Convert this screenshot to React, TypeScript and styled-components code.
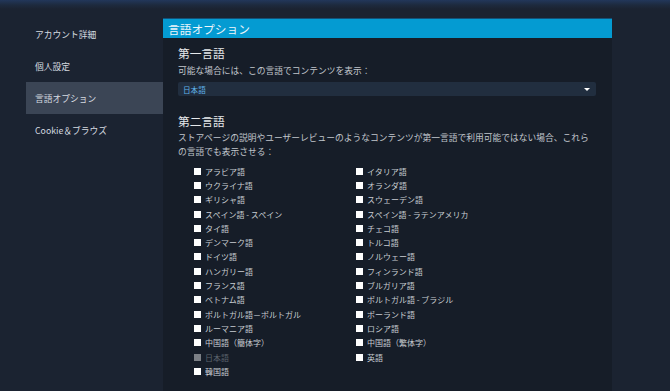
import React from 'react';
import styled, {createGlobalStyle} from 'styled-components';

const GlobalStyle = createGlobalStyle`
  html, body {
    margin: 0;
    padding: 0;
    overflow: hidden;
    background: #1b2331;
  }
  body {
    font-family: "Noto Sans CJK JP", "Noto Sans", sans-serif;
  }
`;

const Page = styled.div`
  display: flex;
  height: 391px;
  overflow: hidden;
  padding: 18px 0 0 26px;
  box-sizing: border-box;
  background: linear-gradient(180deg, #22375a 0px, #1d2a3e 5px, #1b2331 9px);
`;

const Nav = styled.nav`
  display: flex;
  flex-direction: column;
  align-self: flex-start;
  width: 137px;
`;

const NavItem = styled.div<{$active?: boolean}>`
  height: 32px;
  display: flex;
  align-items: center;
  padding-left: 9px;
  font-size: 8.75px;
  color: #d6dbe0;
  background: ${(p) => (p.$active ? '#3b4555' : 'transparent')};
`;

const Panel = styled.section`
  width: 449px;
  background: #161d28;
`;

const PanelHeader = styled.div`
  height: 20px;
  display: flex;
  align-items: center;
  padding-left: 5px;
  background: #049bd2;
  border-top: 1px solid #13527a;
  box-sizing: border-box;
  font-size: 11.7px;
  color: #eef6fb;
`;

const Body = styled.div`
  padding: 6px 16px 0 15px;
`;

const Heading = styled.h2<{$gap?: number}>`
  margin: ${(p) => p.$gap ?? 0}px 0 0;
  font-size: 11.7px;
  line-height: 17px;
  font-weight: normal;
  color: #e6e9ec;
`;

const Desc = styled.p<{$lh: number; $gap: number}>`
  margin: ${(p) => p.$gap}px 0 0;
  font-size: 8.75px;
  line-height: ${(p) => p.$lh}px;
  color: #c1c6cc;
`;

const Select = styled.div`
  margin-top: 5px;
  height: 14px;
  display: flex;
  align-items: center;
  justify-content: space-between;
  padding: 0 6px 0 5px;
  border-radius: 2px;
  background: #212e3f;
  font-size: 7.6px;
  color: #5fb2e8;
`;

const Arrow = styled.span`
  width: 0;
  height: 0;
  border-left: 3px solid transparent;
  border-right: 3px solid transparent;
  border-top: 3px solid #ffffff;
`;

const Grid = styled.div`
  margin-top: 6px;
  padding-left: 16px;
  display: grid;
  grid-auto-flow: column;
  grid-template-columns: 162px 162px;
  grid-template-rows: repeat(15, 14.3px);
`;

const Option = styled.label<{$disabled?: boolean}>`
  display: flex;
  align-items: center;
  gap: 4px;
  font-size: 8px;
  white-space: nowrap;
  color: ${(p) => (p.$disabled ? '#5c636c' : '#c8cdd2')};
`;

const Box = styled.span<{$disabled?: boolean}>`
  width: 7px;
  height: 7px;
  flex: none;
  background: ${(p) => (p.$disabled ? '#7c8086' : '#ffffff')};
`;

const navItems = ['アカウント詳細', '個人設定', '言語オプション', 'Cookie＆ブラウズ'];

const languages = [
  'アラビア語',
  'ウクライナ語',
  'ギリシャ語',
  'スペイン語 - スペイン',
  'タイ語',
  'デンマーク語',
  'ドイツ語',
  'ハンガリー語',
  'フランス語',
  'ベトナム語',
  'ポルトガル語－ポルトガル',
  'ルーマニア語',
  '中国語（簡体字）',
  '日本語',
  '韓国語',
  'イタリア語',
  'オランダ語',
  'スウェーデン語',
  'スペイン語 - ラテンアメリカ',
  'チェコ語',
  'トルコ語',
  'ノルウェー語',
  'フィンランド語',
  'ブルガリア語',
  'ポルトガル語 - ブラジル',
  'ポーランド語',
  'ロシア語',
  '中国語（繁体字）',
  '英語',
];

const App = () => {
  return (
    <>
      <GlobalStyle />
      <Page>
        <Nav>
          {navItems.map((item) => (
            <NavItem key={item} $active={item === '言語オプション'}>
              {item}
            </NavItem>
          ))}
        </Nav>
        <Panel>
          <PanelHeader>言語オプション</PanelHeader>
          <Body>
            <Heading>第一言語</Heading>
            <Desc $lh={13} $gap={3}>
              可能な場合には、この言語でコンテンツを表示：
            </Desc>
            <Select>
              日本語
              <Arrow />
            </Select>
            <Heading $gap={16}>第二言語</Heading>
            <Desc $lh={13.5} $gap={2}>
              ストアページの説明やユーザーレビューのようなコンテンツが第一言語で利用可能ではない場合、これらの言語でも表示させる：
            </Desc>
            <Grid>
              {languages.map((lang) => {
                const disabled = lang === '日本語';
                return (
                  <Option key={lang} $disabled={disabled}>
                    <Box $disabled={disabled} />
                    {lang}
                  </Option>
                );
              })}
            </Grid>
          </Body>
        </Panel>
      </Page>
    </>
  );
};

export default App;
